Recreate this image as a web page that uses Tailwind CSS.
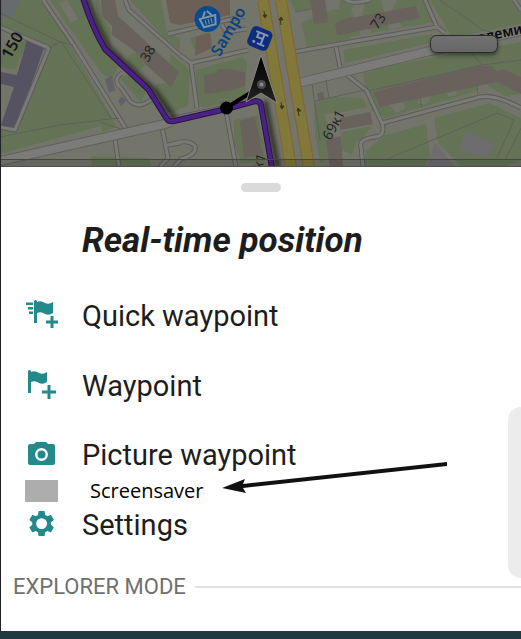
<!DOCTYPE html>
<html lang="en">

<head>
  <meta charset="utf-8">
  <meta name="viewport" content="width=device-width, initial-scale=1">
  <title>Real-time position</title>
  <script src="https://cdn.jsdelivr.net/npm/@tailwindcss/browser@4"></script>
</head>

<body class="min-h-screen flex flex-col bg-[#20383f] font-['Roboto',sans-serif] text-[#1d1d1d] overflow-x-hidden">

  <!-- Map -->
  <div class="border-l border-[#202124] bg-[#74756a]">
    <svg class="block w-full" viewBox="1 0 520 167" role="img" aria-label="Map">
      <defs>
        <linearGradient id="pill" x1="0" x2="0" y1="0" y2="1">
          <stop offset="0" stop-color="#727272" />
          <stop offset="1" stop-color="#666" />
        </linearGradient>
        <linearGradient id="cursor" x1="0" x2="0" y1="0" y2="1">
          <stop offset="0" stop-color="#000" />
          <stop offset="1" stop-color="#222" />
        </linearGradient>
        <filter id="soft" x="-20%" y="-20%" width="140%" height="160%">
          <feGaussianBlur stdDeviation="2" />
        </filter>
      </defs>
      <rect width="521" height="167" fill="#74756a" />

      <!-- Grass -->
      <g fill="#647356">
        <path d="M0 0H45L140 167H92L91 154L0 160V125L15 130L51 48L0 27Z" />
        <path d="M50 0H83L105 52L119 65L112 78L102 74Z" />
        <path d="M20 42L28 40L15 70L1 67V50Z" />
        <path d="M95 0H99L102 16L112 32L108 42L98 20Z" />
        <path d="M130 0H161L167 33L180 38V50L164 38Z" />
        <path d="M120 78L131 74L146 91L141 103Z" />
        <path d="M155 85L180 80V108L170 117L162 108Z" />
        <path d="M128 56L138 52L146 64L139 71L129 64Z" />
        <path d="M170 54L185 65L190 72L188 106L170 112Z" />
        <path d="M196 70L242 57L247 63L245 98L204 108L197 103Z" />
        <path d="M234 120L258 115L267 160L241 163L234 143Z" />
        <path d="M190 38L210 32L209 45L194 50Z" />
        <path d="M290 0H322L321 8L296 12Z" />
        <path d="M325 12L350 6V39L307 47L301 23Z" />
        <path d="M340 0H429L435 22L343 38L337 32Z" />
        <path d="M430 0H514L521 12V24L452 38Z" />
        <path d="M343 50L432 34L435 42L345 63Z" />
        <path d="M363 70L521 42V94L505 96L490 87L386 118L372 111L365 91Z" />
        <path d="M314 103L334 97L362 98L368 107L342 112L324 114L337 154L320 163L315 132Z" />
        <path d="M342 132L372 126L364 137L356 142L352 155L342 150Z" />
        <path d="M434 118L490 103L521 118V160L505 167H462L438 143Z" />
        <path d="M366 151L383 136L426 124L430 155L425 167H364Z" />
        <path d="M132 158L148 155L151 167H127Z" />
      </g>

      <!-- Lots -->
      <g fill="#74756a">
        <path d="M0 154L101 126L102 132L140 120L180 110V126L150 134V158L90 156L0 167Z" />
        <path d="M59 3L67 0L78 19L71 23Z" />
        <path d="M357 0H366L362 14L372 32L361 35L351 10Z" />
        <path d="M381 0H397L392 10L402 27L389 30Z" />
        <path d="M388 103L394 90L402 96L405 109L396 113Z" />
        <path d="M419 94L426 90L430 99L424 105L418 103Z" />
        <path d="M446 88L452 82L457 88L456 95L448 97Z" />
        <path d="M474 83L482 74L488 80L489 90L478 92Z" />
      </g>

      <!-- Buildings -->
      <g fill="#69615b">
        <path d="M101 0H115L118 16L179 72L171 87L146 65L139 54L112 35V26L102 16Z" />
        <path d="M166 0H230V15L180 25L170 23Z" fill="#6c5f55" />
        <path d="M196 37L210 33L212 48L195 56Z" fill="#6c5f55" />
        <path d="M204 75L216 73L218 69L236 70L245 73V86L233 90L205 94Z" />
        <path d="M240 121L255 117L263 155L244 158Z" />
        <path d="M310 0H325L328 22L314 24Z" />
        <path d="M335 23L350 18V33L337 35Z" />
        <path d="M340 20L416 6L420 18L340 35Z" />
        <path d="M373 92L480 66L491 66L498 72L502 69L521 77V94L497 82L380 107Z" />
        <path d="M326 140L341 136L343 167H330Z" />
        <path d="M340 118L370 112L373 124L340 130Z" />
        <path d="M317 94L323 91L325 99L319 101Z" />
      </g>
      <g fill="#555361">
        <path d="M27 40L44 48L15 130L1 125L14 87L1 84V72L17 75Z" />
        <path d="M0 0H21L10 18L0 19Z" fill="#696a6d" />
        <path d="M105 79L112 76L115 90L109 93Z" fill="#626068" />
        <path d="M118 101L122 96L126 101L121 106Z" fill="#626068" />
        <path d="M466 131L495 144L486 158L459 149Z" fill="#6d6c6e" />
        <path d="M435 143L455 167H427Z" fill="#6d6c6e" />
      </g>

      <!-- Streets -->
      <g fill="none" stroke-linejoin="round">
        <g stroke="#5c5c59" stroke-width="5">
          <path d="M43 0L74 45L126 129" />
          <path d="M0 27L49 48L15 130L0 127" />
          <path d="M125 0L129 10L180 55" />
          <path d="M122 73Q112 80 121 88L130 101Q140 110 153 98" />
          <path d="M115 139L119 167M162 127L168 158L160 167M167 145L180 143" />
          <path d="M168 34L245 16M180 55L191 63L248 50M191 63L197 108M170 119L245 103" />
          <path d="M294 52L350 42L437 27L425 0M437 27L445 33" />
          <path d="M346 74L367 91L382 123L480 97Q495 94 521 108M382 123Q386 136 375 137Q358 139 361 147L363 167" />
          <path d="M336 47L340 67M514 0L521 10M345 -1Q350 5 370 0" />
          <path d="M222 25L226 32L246 29M226 111L233 150L236 167M170 145Q188 138 195 146Q197 155 181 159L174 167" />
        </g>
        <g stroke="#7a7a77" stroke-width="3">
          <path d="M43 0L74 45L126 129" />
          <path d="M0 27L49 48L15 130L0 127" />
          <path d="M125 0L129 10L180 55" />
          <path d="M122 73Q112 80 121 88L130 101Q140 110 153 98" />
          <path d="M115 139L119 167M162 127L168 158L160 167M167 145L180 143" />
          <path d="M168 34L245 16M180 55L191 63L248 50M191 63L197 108M170 119L245 103" />
          <path d="M294 52L350 42L437 27L425 0M437 27L445 33" />
          <path d="M346 74L367 91L382 123L480 97Q495 94 521 108M382 123Q386 136 375 137Q358 139 361 147L363 167" />
          <path d="M336 47L340 67M514 0L521 10M345 -1Q350 5 370 0" />
          <path d="M222 25L226 32L246 29M226 111L233 150L236 167M170 145Q188 138 195 146Q197 155 181 159L174 167" />
        </g>
        <g stroke="#60605c">
          <path d="M0 161L165 124L170 122" stroke-width="10" />
          <path d="M298 83L340 73L430 51L521 31" stroke-width="10" />
        </g>
        <g stroke="#7b7b7a">
          <path d="M0 161L165 124L170 122" stroke-width="8" />
          <path d="M298 83L340 73L430 51L521 31" stroke-width="8" />
        </g>
        <!-- Footpaths -->
        <g stroke="#5f605a">
          <path d="M0 13L60 42L73 45M49 48L61 41L111 118M0 137L60 125L119 118M100 122L121 129" />
          <path d="M440 0L483 30L495 33M470 52L482 65L521 60M369 91L482 65M385 160L497 113L514 120L497 158" />
          <path d="M295 12L310 9M312 84L320 140M326 80L329 98M315 101L365 90M420 98L422 108M477 84L478 94M521 128L505 160" />
        </g>
      </g>

      <!-- Highway -->
      <g fill="none" stroke-width="12">
        <path d="M263 0L291 167" stroke="#816436" />
        <path d="M281 0L309 167" stroke="#816436" />
        <path d="M263 0L291 167" stroke="#817839" stroke-width="10" />
        <path d="M281 0L309 167" stroke="#817839" stroke-width="10" />
      </g>
      <g fill="#3d3920" stroke="#3d3920">
        <path d="M264 11L265 17M263 15H267L265 18Z" />
        <path d="M281 25L280 18M279 20H283L281 17Z" />
        <path d="M281 102L282 108M280 106H284L282 109Z" />
        <path d="M299 116L298 109M297 111H301L298 108Z" />
      </g>

      <!-- Labels -->
      <g fill="#252525" font-family="'Noto Sans', sans-serif" text-anchor="middle">
        <text transform="translate(17 48) rotate(-60)" font-size="16" font-weight="600" fill="#151515">150</text>
        <text transform="translate(152 56) rotate(-60)" font-size="14">38</text>
        <text transform="translate(382 24) rotate(-55)" font-size="14">73</text>
        <text transform="translate(338 127) rotate(-62)" font-size="14">69к1</text>
        <text transform="translate(264 163) rotate(-70)" font-size="14">к1</text>
        <text transform="translate(501 38) rotate(-12)" font-size="14" font-weight="600" fill="#0c0c0c">адеми</text>
        <text transform="translate(233 34) rotate(-60)" font-size="16" font-weight="600" fill="#0c4384">Sampo</text>
      </g>

      <!-- Shop -->
      <circle cx="207.500" cy="19" r="13" fill="#0b4a8f" />
      <g transform="rotate(-15 208 19)" fill="none" stroke="#8194a7" stroke-width="2">
        <path d="M200 17H216L214 26H202ZM203 17L207 11M213 17L209 11" />
        <path d="M205 19V24M208 19V24M211 19V24" stroke-width="1" />
      </g>

      <!-- Track -->
      <path d="M84 -2Q93 25 107 49L152 91L172 119M262 101L275 168" fill="none" stroke="#1a1d18" stroke-width="5" transform="translate(3 0)" opacity=".8" filter="url(#soft)" />
      <path d="M83 -2Q92 27 105 49L148 89L167 119Q169 122 174 121L226 109L256 101Q260 101 261 105L272 168" fill="none" stroke="#281448" stroke-width="6" />
      <path d="M83 -2Q92 27 105 49L148 89L167 119Q169 122 174 121L226 109L256 101Q260 101 261 105L272 168" fill="none" stroke="#4b2185" stroke-width="4" />

      <!-- Transit stop -->
      <g transform="rotate(22 260 38)">
        <rect x="249" y="28" width="22" height="21" rx="5" fill="#0c2d7d" />
        <path d="M254 33H267M263 33V44M256 38H263M257 34V38M259 44H267" fill="none" stroke="#8794b4" stroke-width="2" />
        <circle cx="255.500" cy="43.500" r="1.500" fill="#8794b4" />
      </g>

      <!-- Position -->
      <path d="M226 108L255 90" stroke="#000" stroke-width="4" />
      <circle cx="226.500" cy="108" r="6.500" fill="#000" />
      <path d="M261 55L277 103L261 93L246 102Z" fill="url(#cursor)" stroke="#85857e" stroke-width="1" />
      <circle cx="261.500" cy="84.500" r="4.500" fill="#4b4b4b" />
      <circle cx="261.500" cy="84.500" r="2" fill="#888" />

      <rect x="431" y="38" width="67" height="17" rx="6" fill="#20251b" opacity=".7" filter="url(#soft)" />
      <rect x="430.500" y="35.500" width="67" height="17" rx="6" fill="url(#pill)" stroke="#2b2c28" />
      <path d="M0 159.500H521" stroke="#454640" />
      <rect y="160" width="521" height="6" fill="#000" opacity=".12" />
      <path d="M0 166.500H521" stroke="#50514c" />
    </svg>
  </div>

  <!-- Bottom sheet -->
  <main class="relative grow mb-2 pb-7 bg-white border-l border-[#202124]">
    <div class="pt-4">
      <div class="mx-auto w-10 h-[9px] rounded-full bg-[#dadada]"></div>
    </div>

    <h1 class="mt-7 mb-8 pl-[81px] text-[35px] leading-[42px] font-bold italic">Real-time position</h1>

    <nav class="flex flex-col text-[29px] leading-[44px]">
      <button class="flex items-center h-11 mb-[26px] pl-6 text-left">
        <svg class="w-[34px] h-8 mr-[23px] shrink-0" viewBox="0 0 34 32" fill="#23898a" aria-hidden="true">
          <path d="M1 2.500H8V5H1ZM3 7H8V9.500H3ZM4 11.500H8V14H4Z" />
          <path d="M9 1Q10.500 -1 12 1V2Q16 0 20 3Q24 5 28 2V13Q24 16 20 14Q16 11 12 13V23H9V1Z" />
          <path d="M25.500 16H28.500V20.500H33V23.500H28.500V28H25.500V23.500H21V20.500H25.500Z" />
        </svg>
        Quick waypoint
      </button>
      <button class="flex items-center h-11 mb-[25px] pl-6 text-left">
        <svg class="w-[34px] h-8 mr-[23px] shrink-0" viewBox="0 0 34 32" fill="#23898a" aria-hidden="true">
          <path d="M3 1Q4.500 -1 6 1V2Q10 0 14 3Q18 5 22 2V12Q18 15 14 13Q10 10 6 12V23H3V1Z" />
          <path d="M22.500 15H25.500V20.500H31V23.500H25.500V29H22.500V23.500H17V20.500H22.500Z" />
        </svg>
        Waypoint
      </button>
      <button class="flex items-center h-11 pl-6 text-left">
        <svg class="w-[34px] h-8 mr-[23px] shrink-0" viewBox="0 0 34 32" fill="#23898a" aria-hidden="true">
          <path fill-rule="evenodd" d="M11 3H21L23 5H28Q30 5 30 7V24Q30 26 28 26H5Q3 26 3 24V7Q3 5 5 5H9ZM16.500 9A6.500 6.500 0 1 0 16.500 22A6.500 6.500 0 1 0 16.500 9Z" />
          <circle cx="16.500" cy="15.500" r="4" />
        </svg>
        Picture waypoint
      </button>
      <button class="flex items-center h-7 pl-6 text-left font-['Open_Sans',sans-serif] text-[20px] leading-7 text-black">
        <span class="w-[33px] h-[22px] mr-8 shrink-0 bg-[#adadad]"></span>
        Screensaver
      </button>
      <button class="flex items-center h-10 pl-6 text-left">
        <svg class="w-[34px] h-8 mr-[23px] shrink-0" viewBox="0 0 34 32" fill="#23898a" aria-hidden="true">
          <path transform="translate(1 -1) scale(1.300)" d="M19.140 12.940c.04-.3.060-.61.060-.94 0-.32-.02-.64-.07-.94l2.030-1.580c.18-.14.230-.41.120-.61l-1.920-3.320c-.12-.22-.37-.29-.59-.22l-2.390.960c-.5-.38-1.030-.7-1.620-.94L14.400 2.810c-.04-.24-.24-.41-.48-.41h-3.840c-.24 0-.43.170-.47.410L9.250 5.350c-.59.240-1.130.560-1.620.94L5.240 5.330c-.22-.08-.47 0-.59.220L2.740 8.870c-.12.210-.08.470.12.610l2.030 1.580c-.05.3-.09.630-.09.940s.02.640.07.940l-2.030 1.580c-.18.140-.23.410-.12.610l1.920 3.320c.12.220.37.290.59.220l2.390-.96c.5.380 1.030.7 1.620.94l.36 2.540c.05.240.24.410.48.410h3.840c.24 0 .44-.17.470-.41l.36-2.540c.59-.24 1.130-.56 1.620-.94l2.390.960c.22.080.47 0 .59-.22l1.920-3.320c.12-.22.070-.47-.12-.61l-2.010-1.580zM12 16.200A4.200 4.200 0 1 1 12 7.800a4.200 4.200 0 0 1 0 8.400z" />
        </svg>
        Settings
      </button>
    </nav>

    <div class="flex items-center mt-7 pl-3">
      <h2 class="mr-[9px] text-[22px] leading-7 text-[#707070]">EXPLORER MODE</h2>
      <div class="grow h-[2px] bg-[#e2e2e2]"></div>
    </div>

    <!-- Arrow drawn over the sheet -->
    <svg class="absolute left-[221px] top-[292px] w-[228px] h-9" viewBox="0 0 228 36" fill="#111" aria-hidden="true">
      <path d="M0 29L23 20L21 25L225 3V7L21 29L24 34Z" />
    </svg>

    <!-- Edge panel -->
    <div class="absolute right-0 top-[240px] w-[13px] h-[171px] rounded-l-[13px] bg-[#ececed]"></div>
  </main>

</body>

</html>
